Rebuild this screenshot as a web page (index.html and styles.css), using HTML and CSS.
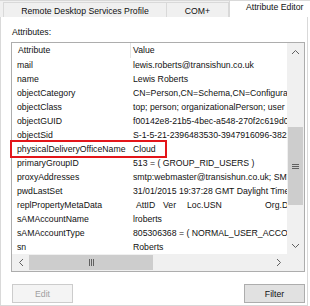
FILE: index.html
```html
<!DOCTYPE html>
<html lang="en">
<head>
    <meta charset="UTF-8">
    <title>Attribute Editor</title>
    <link rel="stylesheet" href="styles.css">
</head>
<body>
    <div class="dialog">
        <div class="tabs">
            <div class="tab tab-wide">Remote Desktop Services Profile</div>
            <div class="tab tab-com">COM+</div>
            <div class="tab tab-active">Attribute Editor</div>
        </div>

        <div class="panel">
            <div class="label">Attributes:</div>

            <div class="list">
                <div class="list-main">
                    <div class="view">
                        <div class="head">
                            <span class="col-a">Attribute</span>
                            <span class="col-v">Value</span>
                        </div>
                        <div class="row"><span class="col-a">mail</span><span class="col-v">lewis.roberts@transishun.co.uk</span></div>
                        <div class="row"><span class="col-a">name</span><span class="col-v">Lewis Roberts</span></div>
                        <div class="row"><span class="col-a">objectCategory</span><span class="col-v">CN=Person,CN=Schema,CN=Configuration,DC=transishun,DC=co,DC=uk</span></div>
                        <div class="row"><span class="col-a">objectClass</span><span class="col-v">top; person; organizationalPerson; user</span></div>
                        <div class="row"><span class="col-a">objectGUID</span><span class="col-v">f00142e8-21b5-4bec-a548-270f2c619d0a</span></div>
                        <div class="row"><span class="col-a">objectSid</span><span class="col-v">S-1-5-21-2396483530-3947916096-3822</span></div>
                        <div class="row"><span class="col-a">physicalDeliveryOfficeName</span><span class="col-v">Cloud</span></div>
                        <div class="row"><span class="col-a">primaryGroupID</span><span class="col-v">513 = ( GROUP_RID_USERS )</span></div>
                        <div class="row"><span class="col-a">proxyAddresses</span><span class="col-v">smtp:webmaster@transishun.co.uk; SMTP:lewis</span></div>
                        <div class="row"><span class="col-a">pwdLastSet</span><span class="col-v">31/01/2015 19:37:28 GMT Daylight Time</span></div>
                        <div class="row"><span class="col-a">replPropertyMetaData</span><span class="col-v meta"><span class="m1">AttID</span><span class="m2">Ver</span><span class="m3">Loc.USN</span><span class="m4">Org.DSA</span></span></div>
                        <div class="row"><span class="col-a">sAMAccountName</span><span class="col-v">lroberts</span></div>
                        <div class="row"><span class="col-a">sAMAccountType</span><span class="col-v">805306368 = ( NORMAL_USER_ACCOUNT )</span></div>
                        <div class="row"><span class="col-a">sn</span><span class="col-v">Roberts</span></div>
                    </div>

                    <div class="vscroll">
                        <div class="arrow">
                            <svg width="9" height="6" viewBox="0 0 9 6"><polyline points="1,5 4.5,1.5 8,5" fill="none" stroke="#606060" stroke-width="1"/></svg>
                        </div>
                        <div class="track-v">
                            <div class="thumb-v">
                                <svg width="7" height="5" viewBox="0 0 7 5"><path d="M0 0.5h7M0 2.5h7M0 4.5h7" stroke="#606060" stroke-width="1"/></svg>
                            </div>
                        </div>
                        <div class="arrow">
                            <svg width="9" height="6" viewBox="0 0 9 6"><polyline points="1,1 4.5,4.5 8,1" fill="none" stroke="#606060" stroke-width="1"/></svg>
                        </div>
                    </div>
                </div>

                <div class="hscroll">
                    <div class="arrow">
                        <svg width="6" height="9" viewBox="0 0 6 9"><polyline points="5,1 1.5,4.5 5,8" fill="none" stroke="#606060" stroke-width="1"/></svg>
                    </div>
                    <div class="track-h">
                        <div class="thumb-h">
                            <svg width="5" height="7" viewBox="0 0 5 7"><path d="M0.5 0v7M2.5 0v7M4.5 0v7" stroke="#606060" stroke-width="1"/></svg>
                        </div>
                    </div>
                    <div class="arrow">
                        <svg width="6" height="9" viewBox="0 0 6 9"><polyline points="1,1 4.5,4.5 1,8" fill="none" stroke="#606060" stroke-width="1"/></svg>
                    </div>
                    <div class="corner"></div>
                </div>
            </div>

            <div class="buttons">
                <button class="btn" disabled>Edit</button>
                <button class="btn">Filter</button>
            </div>

            <!-- red annotation round the office row -->
            <div class="mark"></div>
        </div>
    </div>
</body>
</html>
```

FILE: styles.css
```css
:root {
    --tab-bg: #f0f0f0;
    --tab-border: #d9d9d9;
    --list-border: #adadad;
    --scroll-bg: #f0f0f0;
    --thumb-bg: #cdcdcd;
    --mark-color: #e3151a;
    --text: #111111;
}

body {
    margin: 0;
    background: #ffffff;
    font-family: 'Liberation Sans', Arial, sans-serif;
    font-size: 8.7px;
    color: var(--text);
}

.dialog {
    width: 310px;
    height: 306px;
    overflow: hidden;
}

.tabs {
    height: 17px;
    display: flex;
    align-items: flex-end;
    padding-left: 3px;
    background: var(--tab-bg);
    border-top: 1px solid var(--tab-border);
    box-sizing: border-box;
}

.tab {
    height: 15px;
    box-sizing: border-box;
    border: 1px solid var(--tab-border);
    border-bottom: none;
    display: flex;
    align-items: center;
    justify-content: center;
    padding-top: 2px;
    background: var(--tab-bg);
}

.tab-wide {
    width: 164px;
}

.tab-com {
    width: 62px;
    border-left: none;
}

.tab-active {
    width: 81px;
    height: 17px;
    margin-top: -1px;
    background: #ffffff;
    justify-content: flex-start;
    padding: 0 0 4px 16px;
    border-right: none;
}

.panel {
    position: relative;
    width: 308px;
    height: 289px;
    box-sizing: border-box;
    border: 1px solid var(--tab-border);
    border-top: none;
    padding: 10px 0 0 10px;
}

.label {
    height: 11px;
    line-height: 11px;
    padding-left: 1px;
    margin-bottom: 4px;
}

.list {
    width: 294px;
    height: 230px;
    box-sizing: border-box;
    border: 1px solid var(--list-border);
    display: flex;
    flex-direction: column;
}

.list-main {
    display: flex;
    height: 211px;
}

.view {
    flex: 1;
    overflow: hidden;
}

.head, .row {
    display: flex;
    white-space: pre;
}

.col-a {
    flex: none;
    min-width: 0;
    overflow: hidden;
}

.head {
    height: 15px;
    line-height: 15px;
}

.head .col-a {
    width: 112px;
    padding-left: 6px;
    border-right: 1px solid #e5e5e5;
}

.head .col-v {
    padding-left: 2px;
}

.row {
    height: 14px;
    line-height: 14px;
}

.row .col-a {
    width: 116px;
    padding-left: 5px;
}

.meta {
    display: flex;
}

.m1 { width: 27px; padding-left: 3px; }
.m2 { width: 24px; }
.m3 { width: 78px; }

.vscroll {
    width: 17px;
    background: var(--scroll-bg);
    display: flex;
    flex-direction: column;
}

.arrow {
    width: 17px;
    height: 17px;
    flex: none;
    display: flex;
    align-items: center;
    justify-content: center;
}

.track-v {
    flex: 1;
    padding-top: 67px;
}

.thumb-v {
    width: 15px;
    height: 78px;
    margin-left: 1px;
    background: var(--thumb-bg);
    display: flex;
    align-items: center;
    justify-content: center;
}

.hscroll {
    height: 17px;
    display: flex;
    background: var(--scroll-bg);
}

.track-h {
    flex: 1;
    display: flex;
    align-items: center;
}

.thumb-h {
    width: 124px;
    height: 15px;
    background: var(--thumb-bg);
    display: flex;
    align-items: center;
    justify-content: center;
}

.corner {
    width: 17px;
    background: var(--scroll-bg);
}

.buttons {
    display: flex;
    justify-content: space-between;
    width: 293px;
    margin-top: 12px;
    padding-left: 1px;
}

.btn {
    width: 61px;
    height: 19px;
    font-family: 'Liberation Sans', Arial, sans-serif;
    font-size: 8.7px;
    color: var(--text);
    background: #e1e1e1;
    border: 1px solid var(--list-border);
    padding: 0;
}

.btn:disabled {
    color: #a0a0a0;
    background: #f4f4f4;
    border-color: #cccccc;
}

.mark {
    position: absolute;
    left: 9px;
    top: 123px;
    width: 157px;
    height: 18px;
    box-sizing: border-box;
    border: 2px solid var(--mark-color);
}
```
